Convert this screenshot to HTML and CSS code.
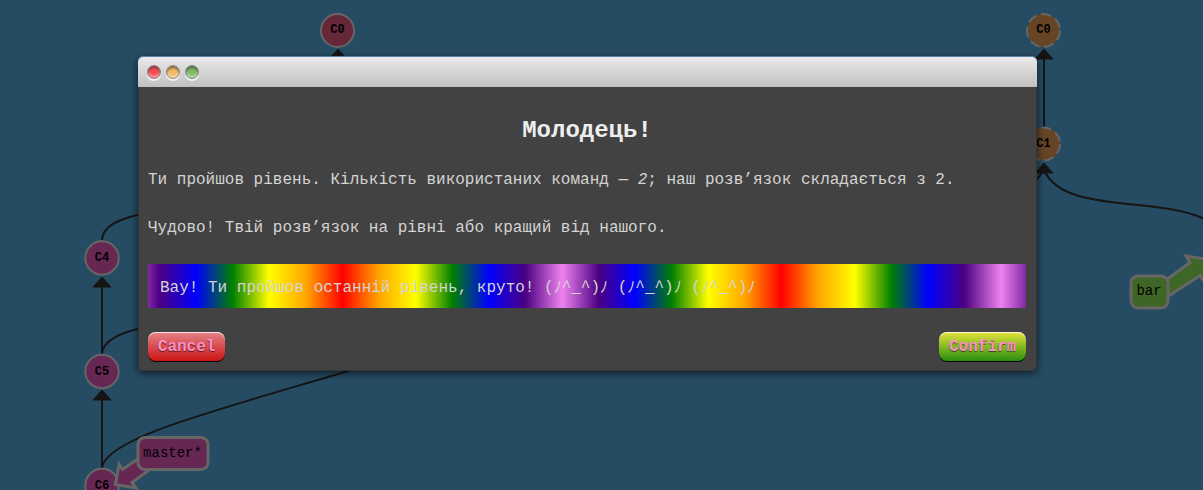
FILE: index.html
```html
<!DOCTYPE html>
<html lang="uk">
<head>
<meta charset="utf-8">
<title>Git</title>
<link rel="stylesheet" href="styles.css">
</head>
<body>
<svg class="tree" width="1203" height="490" viewBox="0 0 1203 490">
  <g class="edges">
    <path d="M338 100V55M1044 127V55M102 354V283M102 468V396"/>
    <path d="M102 240C102 226 122 218 142 214M102 354C102 341 122 332 142 328M102 467C108 438 210 412 345 372L400 353"/>
    <path d="M1043 171C1040 176 1037 180 1032 183M1044 170C1064 216 1165 195 1208 221"/>
  </g>
  <g class="heads">
    <path d="M338 49l9 10h-18zM1044 49l9 10h-18zM1044 163l9 10h-18zM102 277l9 10h-18zM102 390l9 10h-18z"/>
  </g>
  <g class="commit">
    <circle class="main" cx="337.500" cy="30.500" r="16.500"/>
    <circle class="pale" cx="1043.500" cy="30.500" r="16.500"/>
    <circle class="pale" cx="1043.500" cy="144" r="16.500"/>
    <circle cx="102" cy="258" r="16.700"/>
    <circle cx="102" cy="371.500" r="16.700"/>
    <circle cx="102" cy="485.500" r="16.700"/>
  </g>
  <g class="ids">
    <text x="337.500" y="33">C0</text><text x="1043.500" y="33">C0</text><text x="1043.500" y="147">C1</text>
    <text x="102" y="261">C4</text><text x="102" y="375">C5</text><text x="102" y="489">C6</text>
  </g>
  <g class="branch">
    <path d="M138 459L122.500 469.500L119 464L115.500 484.500L136 488L132 482.500L152 468Z"/>
    <rect x="138" y="437.500" width="70" height="32" rx="7"/>
    <text x="172.500" y="457">master*</text>
  </g>
  <g class="branch bar">
    <path d="M1166 280L1190 262.500L1186 256L1208 259.500L1204 281L1200 275.500L1167 297Z"/>
    <rect x="1131" y="276" width="37" height="32" rx="7"/>
    <text x="1149" y="295">bar</text>
  </g>
</svg>
<main class="window">
  <header class="titlebar"><i class="dot red"></i><i class="dot amber"></i><i class="dot green"></i></header>
  <section class="content">
    <h2>Молодець!</h2>
    <p>Ти пройшов рівень. Кількість використаних команд — <em>2</em>; наш розв’язок складається з 2.</p>
    <p>Чудово! Твій розв’язок на рівні або кращий від нашого.</p>
    <p class="rainbow">Вау! Ти пройшов останній рівень, круто! (ﾉ^_^)ﾉ (ﾉ^_^)ﾉ (ﾉ^_^)ﾉ</p>
    <div class="actions"><button class="btn cancel">Cancel</button><button class="btn confirm">Confirm</button></div>
  </section>
</main>
</body>
</html>
```
FILE: styles.css
```css
* { box-sizing: border-box; }
body {
  margin: 0;
  height: 490px;
  overflow: hidden;
  background: #264c64;
  font: 16px/18px "Courier New", "Liberation Mono", "Noto Sans CJK JP", monospace;
  color: #d4d4d4;
}
.tree { position: absolute; left: 0; top: 0; }
.edges { fill: none; stroke: #151515; stroke-width: 2; }
.heads { fill: #151515; stroke: #151515; stroke-width: 1; stroke-linejoin: round; }
.commit { fill: #662753; stroke: #666; stroke-width: 2; }
.main { fill: #662739; }
.pale { fill: #664527; stroke-dasharray: 10 5; }
.ids { font-size: 12px; font-weight: bold; text-anchor: middle; fill: #000; }
.branch { fill: #662753; stroke: #666; stroke-width: 3; }
.bar { fill: #3e6627; }
.branch text { font-size: 14px; text-anchor: middle; fill: #000; stroke: none; }

.window {
  position: relative;
  width: 899px;
  height: 314px;
  margin: 57px 0 0 137.5px;
  border-radius: 5px;
  background: #424242;
  box-shadow: inset 0 0 0 1px #353535, 0 2px 8px rgba(0, 0, 0, .65);
}
.titlebar {
  display: flex;
  gap: 5px;
  height: 30px;
  padding: 8px 9.5px;
  border-radius: 5px 5px 0 0;
  background: linear-gradient(#ebe9eb, #c1c1c1);
  box-shadow: 0 -1px 0 #5982a5;
}
.dot {
  width: 14px;
  height: 14px;
  border-radius: 50%;
  border: 1px solid #888;
  box-shadow: 0 2px 1px #f6f6f6, inset 0 2px 2px rgba(70, 50, 50, .65), inset 0 -2px 3px rgba(255, 255, 255, .5);
}
.red { background: #f84a4e; }
.amber { background: #f4b763; }
.green { background: #7abd64; }
.content { padding: 30px 10.5px 0; }
h2 {
  margin: 0 0 27px;
  font-size: 24px;
  line-height: 27px;
  text-align: center;
  color: #eee;
}
p { margin: 0 0 30px; height: 18px; white-space: pre; }
.rainbow {
  height: 44px;
  margin: -3px 0 24px;
  padding: 15px 12px 0;
  background: linear-gradient(90deg, red, orange, yellow, green, blue, indigo, violet, indigo, blue, green, yellow, orange, red) 194.5px 0 / 439px 100%;
}
.actions { display: flex; justify-content: space-between; }
.btn {
  height: 30px;
  padding: 0 9.800px 1px;
  border: 0;
  border-radius: 8px;
  font: bold 16px/18px "Courier New", "Liberation Mono", monospace;
  color: #ff8fc7;
  text-shadow: 0 1px 1px rgba(0, 0, 0, .6);
  box-shadow: inset 0 -1px 0 #000, inset 0 1px 0 rgba(255, 255, 255, .8);
}
.cancel { background: linear-gradient(#e48389, #cb1111); }
.confirm { background: linear-gradient(#e5e53a, #228b0b); }
```
